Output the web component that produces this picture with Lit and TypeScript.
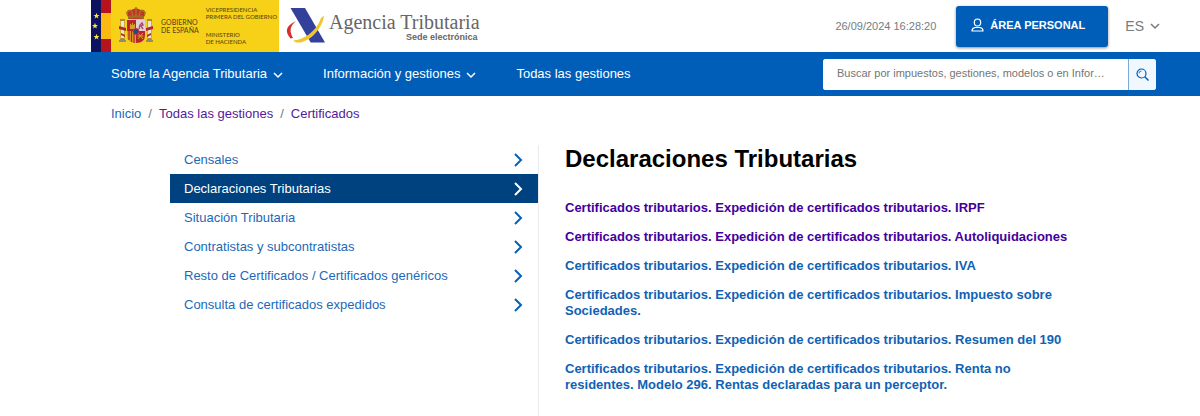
import { LitElement, html, css, svg } from "lit";
import { customElement, property } from "lit/decorators.js";

const chevronDown = html`<svg class="down" viewBox="0 0 10 10" width="10" height="10" aria-hidden="true">
  <path d="M1 3l4 4 4-4" fill="none" stroke="currentColor" stroke-width="1.5" /></svg>`;

const star = (x: number, y: number) => svg`<path transform="translate(${x} ${y})" fill="#ffe836"
  d="M0-3.2L.8-1 3-1 1.2.4 1.900 2.600 0 1.300-1.900 2.600-1.200.4-3-1-.8-1z" />`;

const flags = html`<svg width="20" height="52" viewBox="0 0 20 52" class="flags" aria-hidden="true">
  <path fill="#0d1260" d="M0 0h10v52H0z" />
  <path fill="#b5141f" d="M10 0h10v52H10z" />
  <path fill="#fbb912" d="M10 13h10v26H10z" />
  ${star(5.5, 16)}${star(4, 26)}${star(5.5, 37)}
</svg>`;

const shield = html`<svg class="shield" width="34" height="38" viewBox="0 0 34 38" aria-hidden="true">
  <path fill="#a98b3f" d="M1 12h5v2H5.500v19H7v2H0v-2h1.500V14H1zM28 12h5v2h-.5v19H34v2h-7v-2h1.500V14H28z" />
  <path fill="#e9e5d0" d="M2 14h3v17H2zM29 14h3v17h-3z" />
  <path fill="#b3262c" d="M0 19l7 2v3l-7-2zM34 19l-7 2v3l7-2zM2 26l4 2v2l-4-2zM32 26l-4 2v2l4-2z" />
  <path fill="#8b8d7c" d="M1 32h5v3H1zM28 32h5v3h-5z" />
  <path fill="#c1332b" d="M8 8C6 4 10 2 13 3c1-2 7-2 8 0 3-1 7 1 5 5l-2 4H10z" />
  <path fill="none" stroke="#a37a20" stroke-width="1.300" d="M8.500 8C7 4 12 2 13 5l1 5M25.500 8C27 4 22 2 21 5l-1 5M17 2v8" />
  <path fill="#9b6d21" d="M16.300 0h1.400v3h-1.400zM9 9q8-2 16 0v3q-8-2-16 0z" />
  <path fill="#b9252d" d="M8 13h9v11H8z" />
  <path fill="#e2cfd0" d="M17 13h9v11h-9z" />
  <path fill="#d9a21b" d="M8 24h9v12q-9 0-9-8z" />
  <path fill="#b9252d" d="M17 24h9v4q0 8-9 8z" />
  <path fill="none" stroke="#b9252d" stroke-width="1.200" d="M10 24v9M12.500 24v11M15 24v12" />
  <path fill="#d7a12a" d="M11 22v-5h1v1h1v-2h1v2h1v-1h1v5z" />
  <path fill="none" stroke="#a8487d" stroke-width="1.400" d="M20 22l1-4 2-2 1 2-2 1 2 3" />
  <path fill="none" stroke="#d9a21b" d="M19 26l5 6M24 26l-5 6M18.500 29h6" />
  <circle cx="17" cy="24.500" r="3" fill="#27478f" stroke="#c33a36" />
</svg>`;

const agencyMark = html`<svg class="mark" width="38" height="36" viewBox="0 0 38 36" aria-hidden="true">
  <path fill="#34419a" d="M3.500 0H18l20 34.500H23.700z" />
  <path fill="#f1c62d" d="M6 32.500C15 32 29 25 34 10L37 7.500C36 20 22 36 9 34.500z" />
  <path fill="#d5302f" d="M9 13C3 18 2 23 6 30L3.500 30.500C-2 24-2 18 9 13z" />
</svg>`;

@customElement("side-menu")
class SideMenu extends LitElement {
  @property({ type: Array }) items: string[] = [];
  @property() current = "";
  static styles = css`
    :host { display: block; }
    ul { list-style: none; margin: 0; padding: 0; }
    .item {
      display: flex; align-items: center; justify-content: space-between;
      padding: 7px 15px 6px 14px; line-height: 16px;
      color: #1c69b8; text-decoration: none;
    }
    .item.active { background: #00427f; color: #fff; }
    .arrow { color: #0561b8; }
    .active .arrow { color: #fff; }
  `;
  render() {
    return html`<nav aria-label="Certificados"><ul>
      ${this.items.map((t) => html`<li><a href="#" class="item ${t === this.current ? "active" : ""}">
        <span>${t}</span>
        <svg class="arrow" width="10" height="14" viewBox="0 0 10 14" aria-hidden="true">
          <path d="M2 1l6 6-6 6" fill="none" stroke="currentColor" stroke-width="2" />
        </svg></a></li>`)}
    </ul></nav>`;
  }
}

@customElement("app-root")
class AppRoot extends LitElement {
  static styles = css`
    :host {
      display: block; background: #fff; color: #000;
      font-family: "Liberation Sans", Arial, sans-serif; font-size: 13px; line-height: 16px;
    }
    * { box-sizing: border-box; }
    a { text-decoration: none; }
    .top { display: flex; align-items: center; min-height: 52px; padding: 0 40px 0 91px; }
    .brands { display: flex; align-items: center; }
    .gov {
      display: flex; align-items: center; background: #f7d117; color: #5b4b16;
      font: 500 7px/8px Lato, "Open Sans", sans-serif; height: 52px; width: 188px;
    }
    .flags, .shield, .mark { flex: none; overflow: visible; }
    .flags { margin-right: 8px; }
    .state { margin: 0 0 0 8px; white-space: nowrap; }
    .ministry { display: grid; gap: 11px; margin: 0 2px 2px auto; white-space: nowrap; font-size: 6px; line-height: 7px; }
    .ministry span { display: block; }
    .agency { display: flex; align-items: center; gap: 4px; margin-left: 8px; color: #666; }
    .names { display: grid; justify-items: end; }
    .name { font: 20px/22px "Liberation Serif", serif; }
    .sub { padding-right: 2px; font-size: 9px; line-height: 8px; font-weight: bold; }
    .tools { display: flex; align-items: center; margin-left: auto; color: #757c80; }
    .date { font-size: 11px; }
    .personal {
      display: flex; align-items: center; gap: 6px; padding: 0 0 2px 15px;
      height: 41px; width: 152px; margin: 0 17px 0 20px; border: 0; border-radius: 3px;
      background: #005eb8; color: #fff; font: bold 11px/16px "Liberation Sans", Arial, sans-serif;
      box-shadow: 0 1px 3px #0007;
    }
    .lang {
      display: flex; align-items: center; gap: 6px; border: 0; padding: 0; background: none; color: inherit;
      font: 14px/16px "Liberation Sans", Arial, sans-serif;
    }
    .bar { display: flex; align-items: center; min-height: 44px; padding: 0 44px 0 111px; background: #005eb8; }
    .links { display: flex; gap: 40px; }
    .links a { display: flex; align-items: center; gap: 6px; color: #fff; }
    .down { flex: none; }
    .links .down { margin-top: 2px; }
    .search {
      display: flex; width: 333px; height: 31px; margin-left: auto;
      border-radius: 3px; overflow: hidden; background: #fff;
    }
    .search input {
      flex: 1; min-width: 0; border: 0; padding: 0 6px 2px 14px; background: #fff; outline: 0; appearance: none;
      font: 11px/16px "Liberation Sans", Arial, sans-serif; text-overflow: ellipsis;
    }
    .search input::placeholder { color: #757575; opacity: 1; }
    .search button {
      display: grid; place-items: center; width: 28px; padding: 0;
      border: 0; border-left: 1px solid #7baad8; background: #f0f7ff; color: #005eb8;
    }
    .crumbs { display: flex; gap: 7px; padding: 10px 111px 0; color: #777; }
    .crumbs a { color: #1c69b8; }
    .crumbs .seen { color: #551a9b; }
    .main { display: grid; grid-template-columns: 2fr 3fr; padding: 23px 110px 0 170px; }
    .content { border-left: 1px solid #e8eaed; padding: 0 12px 23px 26px; }
    h1 { margin: 0; font-size: 24px; line-height: 28px; }
    .results { display: grid; gap: 13px; margin: 27px 0 0; padding: 0; list-style: none; font-weight: bold; }
    .results a { display: block; color: #0f62b4; }
    .results .seen { color: #43009c; }
  `;

  private sections = ["Censales", "Declaraciones Tributarias", "Situación Tributaria",
    "Contratistas y subcontratistas", "Resto de Certificados / Certificados genéricos",
    "Consulta de certificados expedidos"];

  private results = [
    { name: "IRPF", seen: true },
    { name: "Autoliquidaciones", seen: true },
    { name: "IVA", seen: false },
    { name: "Impuesto sobre Sociedades.", seen: false },
    { name: "Resumen del 190", seen: false },
    { name: "Renta no residentes. Modelo 296. Rentas declaradas para un perceptor.", seen: false },
  ];

  private fullName = (name: string) =>
    `Certificados tributarios. Expedición de certificados tributarios. ${name}`;

  render() {
    return html`
      <header>
        <div class="top">
          <div class="brands">
            <div class="gov">${flags}${shield}
              <div class="state">GOBIERNO<br />DE ESPAÑA</div>
              <div class="ministry"><span>VICEPRESIDENCIA<br />PRIMERA DEL GOBIERNO</span><span>MINISTERIO<br />DE HACIENDA</span></div>
            </div>
            <div class="agency">${agencyMark}
              <div class="names"><span class="name">Agencia Tributaria</span><span class="sub">Sede electrónica</span></div>
            </div>
          </div>
          <div class="tools">
            <time class="date">26/09/2024 16:28:20</time>
            <button class="personal">
              <svg width="13" height="14" viewBox="0 0 13 14" aria-hidden="true">
                <path fill="none" stroke="currentColor" stroke-width="1.200" d="M6.500 1a3 3.300 0 0 1 0 7a3 3.300 0 0 1 0-7zM4 9.500Q1 10 1 13h11q0-3-3-3.500z" />
              </svg>ÁREA PERSONAL</button>
            <button class="lang">ES ${chevronDown}</button>
          </div>
        </div>
        <div class="bar">
          <nav class="links" aria-label="Principal">
            <a href="#">Sobre la Agencia Tributaria ${chevronDown}</a>
            <a href="#">Información y gestiones ${chevronDown}</a>
            <a href="#">Todas las gestiones</a>
          </nav>
          <form class="search" role="search">
            <input type="text" aria-label="Buscar" placeholder="Buscar por impuestos, gestiones, modelos o en Infor…" />
            <button type="button" aria-label="Buscar">
              <svg width="13" height="13" viewBox="0 0 13 13" fill="none" stroke="currentColor" aria-hidden="true">
                <circle cx="5.500" cy="5.500" r="4.500" stroke-width="1.200" /><path d="M3 5.500A2.500 2.500 0 0 1 5.500 3" stroke-width=".8" /><path d="M8.800 8.800l3.700 3.700" stroke-width="1.500" />
              </svg>
            </button>
          </form>
        </div>
      </header>
      <nav class="crumbs" aria-label="Ruta">
        <a href="#">Inicio</a><span>/</span><a href="#" class="seen">Todas las gestiones</a><span>/</span><a href="#" class="seen">Certificados</a>
      </nav>
      <main class="main">
        <side-menu .items=${this.sections} current="Declaraciones Tributarias"></side-menu>
        <section class="content">
          <h1>Declaraciones Tributarias</h1>
          <ul class="results">
            ${this.results.map((r) => html`<li><a href="#" class=${r.seen ? "seen" : ""}>${this.fullName(r.name)}</a></li>`)}
          </ul>
        </section>
      </main>`;
  }
}
